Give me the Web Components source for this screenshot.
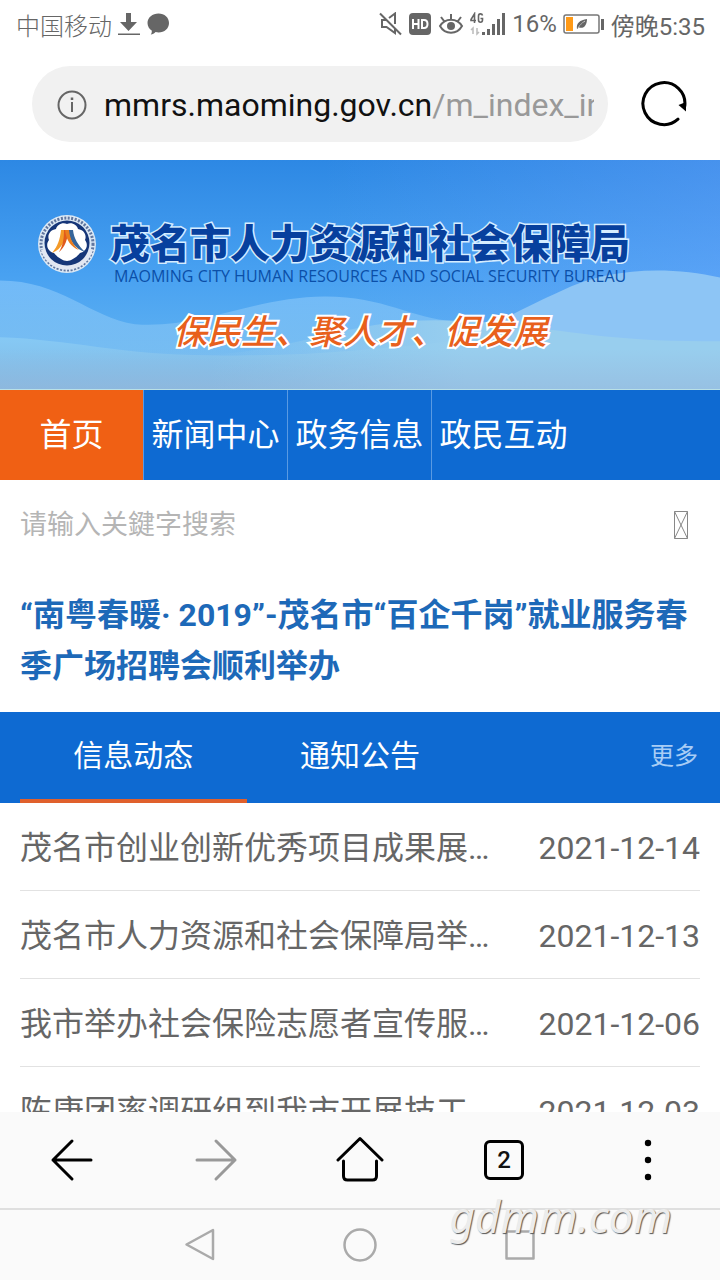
<!DOCTYPE html>
<html lang="zh-CN">
<head>
<meta charset="utf-8">
<meta name="viewport" content="width=device-width, initial-scale=1">
<title>茂名市人力资源和社会保障局</title>
<style>
html, body{
    margin: 0;
    height: 100%;
}
body{
    background: #fff;
    font-family: Roboto, "Noto Sans CJK SC", sans-serif;
    color: #666;
}
</style>
</head>
<body>
<phone-screen>
    <status-bar slot="top" carrier="中国移动" battery="16%" time="傍晚5:35"></status-bar>
    <address-bar slot="top" host="mmrs.maoming.gov.cn" path="/m_index_in"></address-bar>

    <site-banner>
        <span slot="title">茂名市人力资源和社会保障局</span>
        <span slot="english">MAOMING CITY HUMAN RESOURCES AND SOCIAL SECURITY BUREAU</span>
        <span slot="slogan">保民生、聚人才、促发展</span>
    </site-banner>
    <site-nav>
        <nav-item active>首页</nav-item>
        <nav-item>新闻中心</nav-item>
        <nav-item>政务信息</nav-item>
        <nav-item>政民互动</nav-item>
    </site-nav>
    <search-box placeholder="请输入关鍵字搜索"></search-box>
    <head-line>“南粤春暖· 2019”-茂名市“百企千岗”就业服务春季广场招聘会顺利举办</head-line>
    <news-tabs>
        <news-tab active>信息动态</news-tab>
        <news-tab>通知公告</news-tab>
        <span slot="more">更多</span>
    </news-tabs>
    <news-item date="2021-12-14">茂名市创业创新优秀项目成果展…</news-item>
    <news-item date="2021-12-13">茂名市人力资源和社会保障局举…</news-item>
    <news-item date="2021-12-06">我市举办社会保险志愿者宣传服…</news-item>
    <news-item date="2021-12-03">陈康团率调研组到我市开展技工…</news-item>

    <browser-bar slot="bottom" tabs="2"></browser-bar>
    <system-bar slot="bottom"><span>gdmm.com</span></system-bar>
</phone-screen>

<script>
// attach an open shadow root filled from a template string
function shadow(el, html){
    const template = document.createElement('template');
    template.innerHTML = html;
    el.attachShadow({ mode: 'open' }).appendChild(template.content.cloneNode(true));
    return el.shadowRoot;
}

class PhoneScreen extends HTMLElement{
    constructor(){
        super();
        shadow(this, `
<style>
:host{
    display: flex;
    flex-direction: column;
    height: 100vh;
    overflow: hidden;
}
main{
    flex: 1;
    min-height: 0;
    overflow: hidden;
}
</style>
<header><slot name="top"></slot></header>
<main><slot></slot></main>
<footer><slot name="bottom"></slot></footer>
`);
    }
}

class StatusBar extends HTMLElement{
    constructor(){
        super();
        const root = shadow(this, `
<style>
:host{
    display: flex;
    justify-content: space-between;
    align-items: center;
    height: 48px;
    padding: 0 15px 0 16px;
    font-size: 24px;
    color: #666;
}
div{
    display: flex;
    align-items: center;
    gap: 6px;
}
svg{
    display: block;
}
.carrier{
    font-weight: 300;
}
</style>
<div>
    <span class="carrier"></span>
    <svg width="22" height="24" viewBox="0 0 22 24" fill="#666"><path d="M8 1h5v9h6l-8.500 9L2 10h6z"/><path d="M0 21.500h22v1.500H0z"/></svg>
    <svg width="24" height="24" viewBox="0 0 24 24" fill="#666"><path d="M12.500 1.500C18.500 1.500 23 5.600 23 11s-4.500 9.500-10.500 9.500c-1 0-2-.1-2.900-.4-1.300 1.400-3 2.400-4.900 2.500.9-1 1.300-2.500 1-4C3.300 17 1.500 14.200 1.500 11 1.500 5.600 6.500 1.500 12.500 1.500z"/></svg>
</div>
<div>
    <svg width="23" height="24" viewBox="0 0 23 24" fill="none" stroke="#666" stroke-width="2"><path d="M1 1.500l21 21"/><path d="M7 8H3v7h4.500l8.500 6v-5M10 6l6-4.500V12"/></svg>
    <svg width="24" height="24" viewBox="0 0 24 24"><rect x="1" y="1" width="22" height="22" rx="4" fill="#666"/><path d="M5 7v10M10.500 7v10M5 12h5.500M14 8v8h2c2 0 3.500-1.500 3.500-4S18 8 16 8z" fill="none" stroke="#fff" stroke-width="2"/></svg>
    <svg width="26" height="24" viewBox="0 0 26 24" fill="none" stroke="#666" stroke-width="2"><path d="M2 14c5-8.500 17-8.500 22 0-5 9-17 9-22 0zM3 5l3 4M23 5l-3 4M13 2v5"/><circle cx="13" cy="14" r="4" fill="#666" stroke="none"/></svg>
    <svg width="36" height="24" viewBox="0 0 36 24"><g fill="none" stroke="#666" stroke-width="1.600"><path d="M4.500 11V1.800L1 7.500v1h5M12.500 3.500C12 1.200 8.500 1.200 8.500 4v4c0 3 4 3 4 0V6.500h-2"/></g><path d="M3 22v-6l-2 2M7 16v6l2-2" fill="none" stroke="#bbb" stroke-width="1.500"/><path d="M12 20h3v3h-3zM17 17h3v6h-3zM22 12h3v11h-3zM27 7h3v16h-3zM32 1h3v22h-3z" fill="#666"/></svg>
    <span class="battery"></span>
    <svg width="42" height="24" viewBox="0 0 42 24"><rect x="1" y="3" width="35" height="18" rx="2" fill="#fff" stroke="#777" stroke-width="1.500"/><rect x="3" y="5" width="7" height="14" fill="#ff9a17"/><path d="M38 7h3v11h-3z" fill="#666"/><path d="M14 17c-1-6 3-9 10-10 0 6-3 10-8 8.500z" fill="#666"/><path d="M15 16c2-3 4-5 7-7" stroke="#fff" stroke-width=".7"/></svg>
    <span class="time"></span>
</div>
`);
        root.querySelector('.carrier').textContent = this.getAttribute('carrier');
        root.querySelector('.battery').textContent = this.getAttribute('battery');
        root.querySelector('.time').textContent = this.getAttribute('time');
    }
}

class AddressBar extends HTMLElement{
    constructor(){
        super();
        const root = shadow(this, `
<style>
:host{
    display: flex;
    align-items: center;
    gap: 32px;
    padding: 18px 32px;
}
.pill{
    flex: 1;
    min-width: 0;
    display: flex;
    align-items: center;
    gap: 16px;
    height: 76px;
    padding: 2px 14px 0 24px;
    box-sizing: border-box;
    border-radius: 38px;
    background: #f1f1f1;
}
.pill svg{
    flex: none;
}
.url{
    flex: 1;
    overflow: hidden;
    white-space: nowrap;
    font-size: 32px;
    line-height: 44px;
    color: #999;
    text-decoration: none;
}
.host{
    color: #111;
}
button{
    padding: 0;
    border: none;
    background: none;
}
svg{
    display: block;
}
</style>
<div class="pill">
    <svg width="32" height="32" viewBox="0 0 32 32" fill="none" stroke="#666" stroke-width="2"><circle cx="16" cy="16" r="13.500"/><path d="M16 13v10" /><path d="M16 8.500v2.500" stroke-width="2.500"/></svg>
    <a class="url" href="#"><span class="host"></span><span class="path"></span></a>
</div>
<button aria-label="刷新">
    <svg width="48" height="48" viewBox="0 0 48 48"><path d="M38 39.200A21 21 0 1 1 44.800 26" fill="none" stroke="#000" stroke-width="3" stroke-linecap="round"/><path d="M38.500 25l7.500-3v9.500z" fill="#000"/></svg>
</button>
`);
        root.querySelector('.host').textContent = this.getAttribute('host');
        root.querySelector('.path').textContent = this.getAttribute('path');
    }
}

class SiteBanner extends HTMLElement{
    constructor(){
        super();
        shadow(this, `
<style>
:host{
    display: grid;
    border-bottom: 1px solid #b9e0e6;
}
.scene, .content{
    grid-area: 1 / 1;
    min-width: 0;
}
.scene{
    width: 100%;
    height: 100%;
    min-height: 0;
    contain: size;
}
.content{
    position: relative;
    padding: 55px 38px 36px;
}
.brand{
    display: flex;
    align-items: flex-start;
    gap: 14px;
}
.logo{
    flex: none;
}
h1{
    margin: 0;
    font: 900 40px/52px "Noto Sans CJK SC", sans-serif;
    color: #07409e;
    white-space: nowrap;
    -webkit-text-stroke: 3px #d5edff;
    paint-order: stroke fill;
}
.english{
    margin: 0;
    padding-left: 4px;
    font: 16px/18px "Open Sans", sans-serif;
    color: #0b4fa8;
    white-space: nowrap;
}
.slogan{
    margin: 22px 0 0;
    text-align: center;
    font: italic 500 34px/46px "Noto Sans CJK SC", sans-serif;
    color: #e8601c;
    -webkit-text-stroke: 4px #fff;
    paint-order: stroke fill;
}
</style>
<svg class="scene" viewBox="0 0 720 230" preserveAspectRatio="none">
    <defs>
        <linearGradient id="sky" x1="0" y1="0" x2="0" y2="1"><stop offset="0" stop-color="#2d88e4"/><stop offset=".5" stop-color="#48a1f1"/><stop offset="1" stop-color="#69b9f2"/></linearGradient>
        <linearGradient id="side"><stop offset=".45" stop-color="#77a5ff" stop-opacity="0"/><stop offset="1" stop-color="#77a5ff" stop-opacity=".35"/></linearGradient>
        <linearGradient id="hill" x1="0" y1="0" x2="0" y2="1"><stop offset="0" stop-color="#7fc2fa"/><stop offset="1" stop-color="#7cbfee"/></linearGradient>
        <linearGradient id="front" x1="0" y1="0" x2="0" y2="1"><stop offset="0" stop-color="#86c9f5"/><stop offset="1" stop-color="#80b9e2"/></linearGradient>
        <linearGradient id="mist"><stop offset="0" stop-color="#98ceee" stop-opacity="0"/><stop offset=".5" stop-color="#98ceee"/></linearGradient>
        <linearGradient id="haze" x1="0" y1="0" x2="0" y2="1"><stop offset="0" stop-color="#96b8dc" stop-opacity="0"/><stop offset="1" stop-color="#96b8dc" stop-opacity=".6"/></linearGradient>
    </defs>
    <rect width="720" height="230" fill="url(#sky)"/>
    <rect width="720" height="230" fill="url(#side)"/>
    <path d="M0 121C60 121 90 158 135 165C200 170 255 137 325 137C385 137 410 159 455 162V230H0z" fill="url(#hill)" opacity=".75"/>
    <path d="M440 210C460 180 520 150 560 132C610 107 670 107 720 118V230H440z" fill="#8dc5f5"/>
    <path d="M0 178C70 180 120 196 210 196C300 198 380 190 470 180V230H0z" fill="url(#front)"/>
    <path d="M210 196C300 190 350 161 435 161C540 162 585 184 720 182V230H210z" fill="url(#mist)"/>
    <rect y="190" width="720" height="40" fill="url(#haze)"/>
</svg>
<div class="content">
    <div class="brand">
        <svg class="logo" width="58" height="58" viewBox="0 0 58 58">
            <circle cx="29" cy="29" r="29" fill="#dce8f4"/>
            <circle cx="29" cy="29" r="26" fill="none" stroke="#61769f" stroke-width="3" stroke-dasharray="2 1.500"/>
            <path d="M3 35a27 27 0 0 0 52 0l-5-2H8z" fill="#e2e7f2"/>
            <circle cx="29" cy="28" r="22.500" fill="#163678"/>
            <path d="M29 9c5-2 10 1 11 5 6 1 9 6 7 11 4 5 1 12-5 13-3 4-9 8-13 8s-10-4-13-8c-6-1-9-8-5-13-2-5 1-10 7-11 1-4 6-7 11-5z" fill="#fff"/>
            <path d="M23 15h5c0 10-4 19-14 23 6-7 8-14 9-23z" fill="#f49a28"/>
            <path d="M26 15h4c0 9-3 17-9 22 4-7 5-13 5-22z" fill="#e05a1c"/>
            <path d="M30 15h5c1 9 5 15 12 22-10-3-16-12-17-22z" fill="#36659a"/>
            <path d="M27 15h4c1 9 4 15 10 20-8-3-13-10-14-20z" fill="#eb7d1f"/>
        </svg>
        <div>
            <h1><slot name="title"></slot></h1>
            <p class="english"><slot name="english"></slot></p>
        </div>
    </div>
    <p class="slogan"><slot name="slogan"></slot></p>
</div>
`);
    }
}

class SiteNav extends HTMLElement{
    constructor(){
        super();
        shadow(this, `
<style>
:host{
    display: block;
    background: #0e6ad2;
}
nav{
    display: grid;
    grid-template-columns: repeat(5, 1fr);
}
</style>
<nav><slot></slot></nav>
`);
    }
}

class NavItem extends HTMLElement{
    constructor(){
        super();
        shadow(this, `
<style>
:host{
    display: block;
    border-right: 1px solid #5a9ae2;
}
:host([active]){
    background: #f06014;
    background-clip: padding-box;
}
:host(:last-of-type){
    border-right-color: transparent;
}
a{
    display: block;
    font-size: 32px;
    line-height: 90px;
    text-align: center;
    white-space: nowrap;
    color: #fff;
    text-decoration: none;
}
</style>
<a href="#"><slot></slot></a>
`);
    }
}

class SearchBox extends HTMLElement{
    constructor(){
        super();
        const root = shadow(this, `
<style>
:host{
    display: block;
}
form{
    display: flex;
    align-items: center;
    height: 90px;
    padding: 0 31px 0 20px;
}
input{
    flex: 1;
    min-width: 0;
    padding: 0;
    border: none;
    outline: none;
    background: none;
    font: 27px/40px Roboto, "Noto Sans CJK SC", sans-serif;
    color: #666;
}
input::placeholder{
    color: #b5b5b5;
}
button{
    padding: 0;
    border: none;
    background: none;
}
svg{
    display: block;
}
</style>
<form>
    <input type="text">
    <button type="button" aria-label="搜索">
        <svg width="16" height="30" viewBox="0 0 16 30" fill="none" stroke="#888"><path d="M1.500 1.500h13v27h-13zM1.500 1.500l13 27M14.500 1.500l-13 27"/></svg>
    </button>
</form>
`);
        const input = root.querySelector('input');
        input.placeholder = this.getAttribute('placeholder');
        input.setAttribute('aria-label', this.getAttribute('placeholder'));
    }
}

class HeadLine extends HTMLElement{
    constructor(){
        super();
        shadow(this, `
<style>
:host{
    display: block;
    padding: 20px;
}
h2{
    margin: 0;
    font-size: 32px;
    line-height: 51px;
    font-weight: 700;
}
a{
    color: #1d69b8;
    text-decoration: none;
}
</style>
<h2><a href="#"><slot></slot></a></h2>
`);
    }
}

class NewsTabs extends HTMLElement{
    constructor(){
        super();
        shadow(this, `
<style>
:host{
    display: grid;
    grid-template-columns: repeat(3, 1fr);
    padding: 0 20px;
    background: #0e6ad2;
}
a{
    justify-self: end;
    padding-right: 2px;
    font-size: 24px;
    line-height: 88px;
    color: #a8cdf5;
    text-decoration: none;
}
</style>
<slot></slot>
<a href="#"><slot name="more"></slot></a>
`);
    }
}

class NewsTab extends HTMLElement{
    constructor(){
        super();
        shadow(this, `
<style>
:host{
    display: block;
    border-bottom: 4px solid transparent;
}
:host([active]){
    border-color: #e0602c;
}
button{
    display: block;
    width: 100%;
    height: 87px;
    padding: 0;
    border: none;
    background: none;
    font: 30px/87px Roboto, "Noto Sans CJK SC", sans-serif;
    color: #fff;
}
</style>
<button><slot></slot></button>
`);
    }
}

class NewsItem extends HTMLElement{
    constructor(){
        super();
        const root = shadow(this, `
<style>
:host{
    display: block;
    margin: 0 20px;
    border-bottom: 1px solid #e2e2e2;
}
a{
    display: flex;
    justify-content: space-between;
    padding-top: 3px;
    font-size: 32px;
    line-height: 84px;
    white-space: nowrap;
    color: #666;
    text-decoration: none;
}
</style>
<a href="#"><span><slot></slot></span><time></time></a>
`);
        root.querySelector('time').textContent = this.getAttribute('date');
    }
}

class BrowserBar extends HTMLElement{
    constructor(){
        super();
        const root = shadow(this, `
<style>
:host{
    display: grid;
    grid-template-columns: repeat(5, 1fr);
    height: 96px;
    background: #fafafa;
    border-bottom: 2px solid #dfdfdf;
}
button{
    display: flex;
    align-items: center;
    justify-content: center;
    padding: 0;
    border: none;
    background: none;
}
svg{
    fill: none;
    stroke: #000;
    stroke-width: 3;
    stroke-linecap: round;
    stroke-linejoin: round;
}
.forward{
    stroke: #999;
}
.count{
    width: 40px;
    height: 40px;
    box-sizing: border-box;
    border: 3px solid #000;
    border-radius: 6px;
    font: 500 24px/35px Roboto, sans-serif;
    color: #111;
    text-align: center;
}
</style>
<button aria-label="后退"><svg width="48" height="48" viewBox="0 0 48 48"><path d="M43 24H5M24 5L5 24l19 19"/></svg></button>
<button aria-label="前进"><svg class="forward" width="48" height="48" viewBox="0 0 48 48"><path d="M5 24h38M24 5l19 19-19 19"/></svg></button>
<button aria-label="主页"><svg width="48" height="48" viewBox="0 0 48 48"><path d="M2 24L24 2.500 46 24M7.500 25v15q0 4 4 4h25q4 0 4-4V25"/></svg></button>
<button aria-label="标签页"><span class="count"></span></button>
<button aria-label="菜单"><svg width="48" height="48" viewBox="0 0 48 48" style="fill:#000;stroke:none"><circle cx="24" cy="7" r="3.200"/><circle cx="24" cy="24" r="3.200"/><circle cx="24" cy="41" r="3.200"/></svg></button>
`);
        root.querySelector('.count').textContent = this.getAttribute('tabs');
    }
}

class SystemBar extends HTMLElement{
    constructor(){
        super();
        shadow(this, `
<style>
:host{
    position: relative;
    display: grid;
    grid-template-columns: 3fr 4fr 4fr 4fr 3fr;
    height: 70px;
    background: #fafafa;
}
button{
    display: flex;
    align-items: center;
    justify-content: center;
    padding: 0;
    border: none;
    background: none;
}
button:first-of-type{
    grid-column: 2;
}
svg{
    fill: none;
    stroke: #aaa;
    stroke-width: 2.500;
    stroke-linejoin: round;
}
/* watermark over both bottom bars */
.mark{
    position: absolute;
    right: 48px;
    bottom: 34px;
    font: italic 44px/60px "Noto Sans", sans-serif;
    color: #ececec;
    text-shadow: 1px 1px 1px #555;
    pointer-events: none;
}
</style>
<button aria-label="返回"><svg width="36" height="36" viewBox="0 0 36 36"><path d="M31 3v29L4.500 17.500z"/></svg></button>
<button aria-label="桌面"><svg width="36" height="36" viewBox="0 0 36 36"><circle cx="18" cy="18" r="15.500"/></svg></button>
<button aria-label="最近任务"><svg width="36" height="36" viewBox="0 0 36 36"><path d="M4.500 4.500h27v27h-27z"/></svg></button>
<div class="mark"><slot></slot></div>
`);
    }
}

window.customElements.define('phone-screen', PhoneScreen);
window.customElements.define('status-bar', StatusBar);
window.customElements.define('address-bar', AddressBar);
window.customElements.define('site-banner', SiteBanner);
window.customElements.define('site-nav', SiteNav);
window.customElements.define('nav-item', NavItem);
window.customElements.define('search-box', SearchBox);
window.customElements.define('head-line', HeadLine);
window.customElements.define('news-tabs', NewsTabs);
window.customElements.define('news-tab', NewsTab);
window.customElements.define('news-item', NewsItem);
window.customElements.define('browser-bar', BrowserBar);
window.customElements.define('system-bar', SystemBar);
</script>
</body>
</html>
